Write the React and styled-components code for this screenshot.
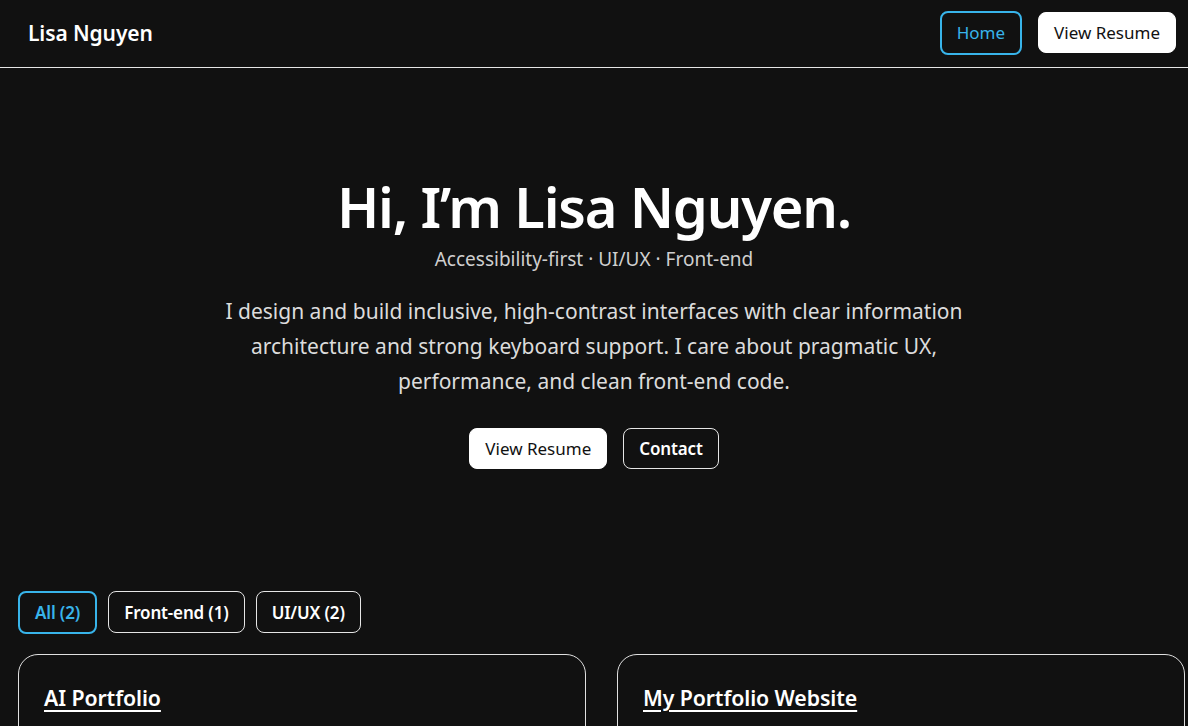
import React from "react";
import styled, { createGlobalStyle } from "styled-components";

const Global = createGlobalStyle`
  html, body { margin: 0; padding: 0; background: #111111; }
  body { font-family: "Noto Sans", "Open Sans", sans-serif; color: #fff; }
  * { box-sizing: border-box; }
`;

const Header = styled.header`
  height: 68px;
  border-bottom: 1px solid #e6e6e6;
  display: flex;
  align-items: center;
  justify-content: space-between;
  padding: 0 12px 2px 28px;
`;

const Brand = styled.a`
  font-size: 21px;
  font-weight: 600;
  color: #fff;
  text-decoration: none;
  letter-spacing: -0.1px;
`;

const Nav = styled.nav`
  display: flex;
  align-items: center;
  gap: 16px;
`;

const Button = styled.a`
  display: inline-flex;
  align-items: center;
  justify-content: center;
  height: ${(p) => p.$h || 41}px;
  padding: 0 ${(p) => p.$px || 15}px;
  border-radius: 8px;
  font-size: 17px;
  font-weight: ${(p) => (p.$bold ? 600 : 400)};
  letter-spacing: ${(p) => (p.$bold ? "-0.15px" : "0")};
  text-decoration: none;
  cursor: pointer;
  color: ${(p) => (p.$variant === "solid" ? "#111" : p.$variant === "active" ? "#38b4ea" : "#fff")};
  background: ${(p) => (p.$variant === "solid" ? "#fff" : "transparent")};
  border: ${(p) =>
    p.$variant === "active" ? "2px solid #38b4ea" : p.$variant === "solid" ? "1px solid #fff" : "1px solid #e6e6e6"};
`;

const Hero = styled.section`
  display: flex;
  flex-direction: column;
  align-items: center;
  text-align: center;
  padding: 102px 20px 0;
  height: 523px;
`;

const Title = styled.h1`
  margin: 0;
  font-size: 56px;
  font-weight: 600;
  line-height: 72px;
  letter-spacing: -1.2px;
`;

const Subtitle = styled.p`
  margin: 4px 0 0;
  font-size: 19px;
  color: #cfcfcf;
  line-height: 26px;
`;

const Lead = styled.p`
  margin: 22px 0 0;
  max-width: 760px;
  font-size: 21px;
  line-height: 35px;
  color: #dcdcdc;
`;

const Actions = styled.div`
  display: flex;
  gap: 16px;
  margin-top: 29px;
`;

const Filters = styled.div`
  display: flex;
  gap: 11px;
  padding: 0 18px;
`;

const Grid = styled.div`
  display: grid;
  grid-template-columns: 1fr 1fr;
  gap: 31px;
  padding: 20px 3px 0 18px;
`;

const Card = styled.article`
  border: 1px solid #e0e0e0;
  border-radius: 20px;
  padding: 28px 25px;
  height: 200px;
`;

const CardTitle = styled.a`
  font-size: 21.3px;
  font-weight: 600;
  color: #fff;
  text-decoration: underline;
  text-decoration-thickness: 2px;
  text-underline-offset: 4px;
  letter-spacing: -0.1px;
`;

export default function App() {
  return (
    <>
      <Global />
      <Header>
        <Brand href="#">Lisa Nguyen</Brand>
        <Nav>
          <Button $variant="active" $h={44}>Home</Button>
          <Button $variant="solid">View Resume</Button>
        </Nav>
      </Header>
      <Hero>
        <Title>Hi, I’m Lisa Nguyen.</Title>
        <Subtitle>Accessibility-first · UI/UX · Front-end</Subtitle>
        <Lead>
          I design and build inclusive, high-contrast interfaces with clear information architecture and strong
          keyboard support. I care about pragmatic UX, performance, and clean front-end code.
        </Lead>
        <Actions>
          <Button $variant="solid">View Resume</Button>
          <Button $bold>Contact</Button>
        </Actions>
      </Hero>
      <Filters>
        <Button $variant="active" $bold $h={43}>All (2)</Button>
        <Button $bold $h={42}>Front-end (1)</Button>
        <Button $bold $h={42}>UI/UX (2)</Button>
      </Filters>
      <Grid>
        <Card>
          <CardTitle href="#">AI Portfolio</CardTitle>
        </Card>
        <Card>
          <CardTitle href="#">My Portfolio Website</CardTitle>
        </Card>
      </Grid>
    </>
  );
}
